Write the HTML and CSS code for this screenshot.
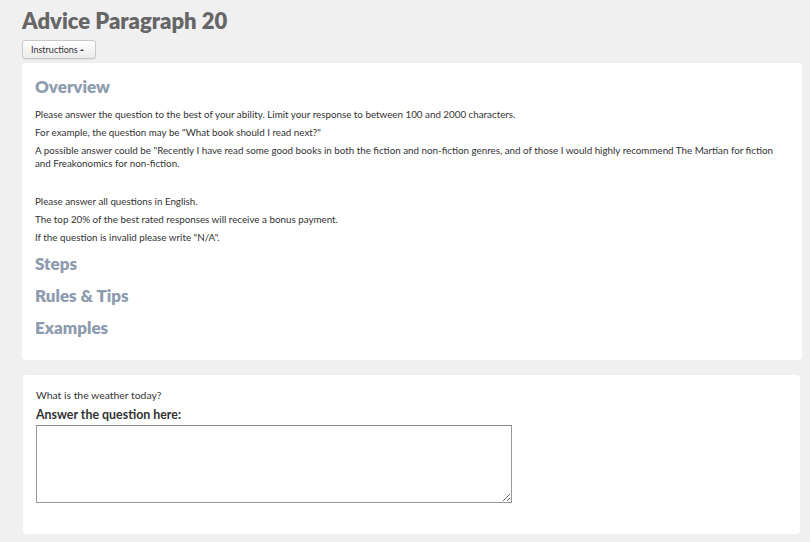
FILE: index.html
```html
<!DOCTYPE html>
<html>
<head>
<meta charset="utf-8">
<link rel="stylesheet" href="styles.css">
</head>
<body>
<div class="page">
  <h1 class="title">Advice Paragraph 20</h1>
  <button class="btn">Instructions<span class="caret"></span></button>
  <section class="panel panel-instructions">
    <h2 class="heading">Overview</h2>
    <p>Please answer the question to the best of your ability. Limit your response to between 100 and 2000 characters.</p>
    <p>For example, the question may be "What book should I read next?"</p>
    <p>A possible answer could be "Recently I have read some good books in both the fiction and non-fiction genres, and of those I would highly recommend The Martian for fiction and Freakonomics for non-fiction.</p>
    <div class="spacer"></div>
    <p>Please answer all questions in English.</p>
    <p>The top 20% of the best rated responses will receive a bonus payment.</p>
    <p>If the question is invalid please write "N/A".</p>
    <h2 class="heading">Steps</h2>
    <h2 class="heading">Rules &amp; Tips</h2>
    <h2 class="heading">Examples</h2>
  </section>
  <section class="panel panel-question">
    <p class="question">What is the weather today?</p>
    <label class="label">Answer the question here:</label>
    <textarea class="answer"></textarea>
  </section>
</div>
</body>
</html>
```
FILE: styles.css
```css
html, body {
  margin: 0;
  padding: 0;
}
body {
  background: #f0f0f0;
  font-family: Lato, "Open Sans", sans-serif;
  color: #333;
}
.page {
  padding: 6px 8px 0 22px;
}
.title {
  margin: 0;
  font-size: 22px;
  line-height: 30px;
  font-weight: 800;
  color: #666;
}
.btn {
  display: inline-flex;
  align-items: center;
  margin-top: 4px;
  height: 19px;
  width: 74px;
  padding: 0 0 0 8px;
  font-family: Lato, sans-serif;
  font-size: 9px;
  color: #333;
  background: linear-gradient(#ffffff, #ebebeb);
  border: 1px solid #c8c8c8;
  border-radius: 3px;
  box-shadow: 0 1px 1px rgba(0,0,0,0.06);
}
.caret {
  display: inline-block;
  width: 0;
  height: 0;
  margin-left: 2px;
  border-left: 2px solid transparent;
  border-right: 2px solid transparent;
  border-bottom: 2px solid #333;
}
.panel {
  background: #fff;
  border-radius: 4px;
}
.panel-instructions {
  margin-top: 4px;
  padding: 13px 13px 16px 13px;
  height: 268px;
}
.heading {
  margin: 0;
  font-size: 17px;
  line-height: 22px;
  font-weight: 800;
  color: #8d9cae;
}
.panel-instructions .heading + p {
  margin-top: 10px;
}
.panel-instructions .heading + .heading {
  margin-top: 10px;
}
.panel-instructions p + .heading {
  margin-top: 9px;
}
.panel-instructions p {
  margin: 0 0 5px 0;
  font-size: 9.8px;
  line-height: 13px;
  color: #333;
}
.spacer {
  height: 20px;
}
.panel-question {
  margin: 15px 2px 0 1px;
  padding: 14px 13px 31px 13px;
}
.question {
  margin: 0;
  font-size: 10.4px;
  line-height: 13px;
  color: #333;
}
.label {
  display: block;
  margin-top: 6px;
  font-size: 12.4px;
  font-weight: 700;
  line-height: 14px;
  color: #333;
}
.answer {
  display: block;
  margin-top: 3px;
  width: 476px;
  height: 78px;
  box-sizing: border-box;
  border: 1px solid #999;
  border-top-color: #888;
  border-radius: 0;
  resize: both;
}
```
